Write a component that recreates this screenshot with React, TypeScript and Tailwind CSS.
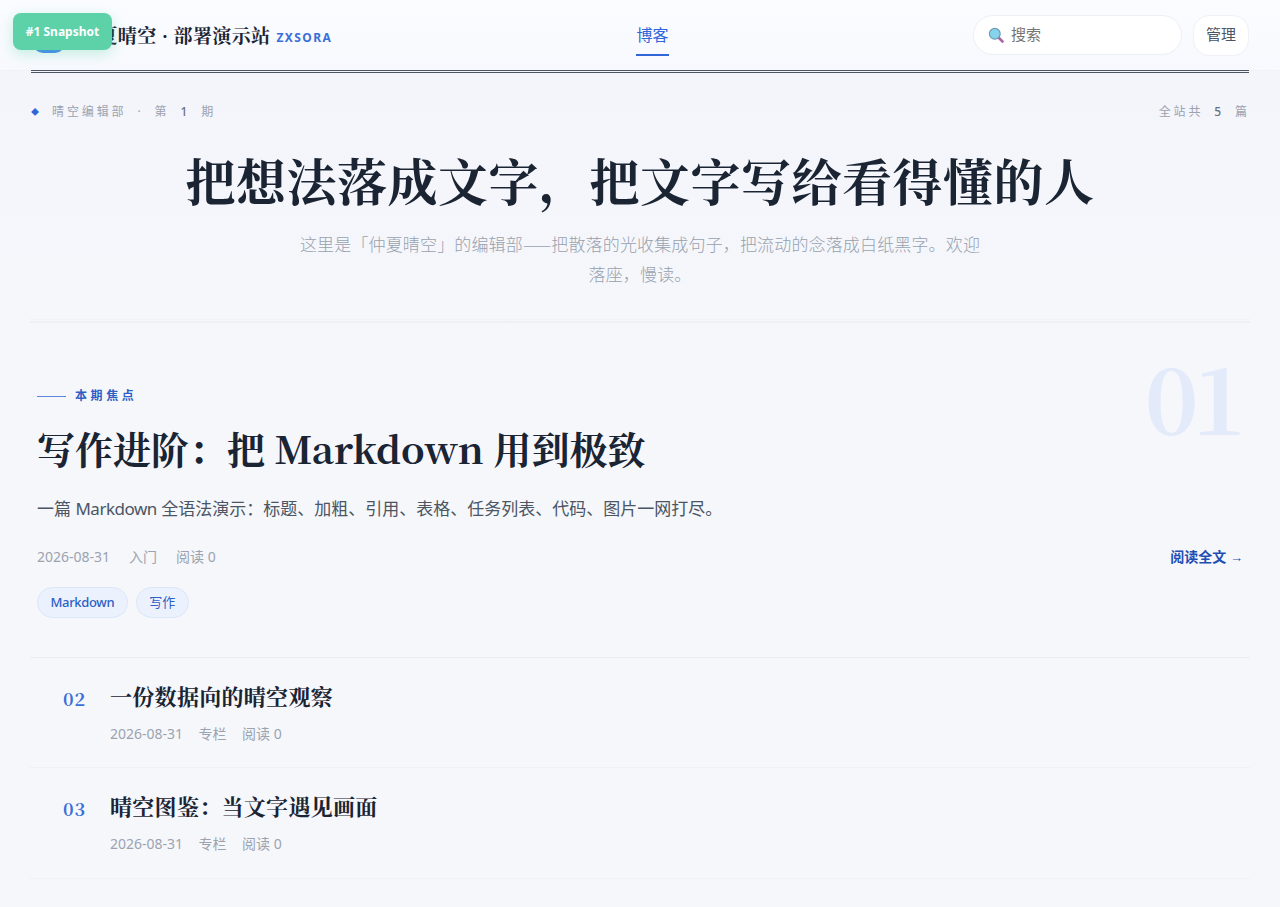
export default function App() {
  const serif = "font-['Noto_Serif_CJK_SC','Source_Han_Serif_SC','Liberation_Serif','Noto_Sans_CJK_SC',serif]";
  const sans = "font-['Noto_Sans','Noto_Sans_CJK_SC',sans-serif]";
  const Meta = ({ cat, gap }: { cat: string; gap: string }) => (
    <div className={`flex text-[14px] leading-[20px] text-[#9ca3af] ${gap}`}>
      <span>2026-08-31</span>
      <span>{cat}</span>
      <span>阅读 0</span>
    </div>
  );
  const Row = ({ n, title, h }: { n: string; title: string; h: string }) => (
    <div className={`flex border-b border-[#eef1f6] pl-[33px] pt-[21px] ${h}`}>
      <div className={`${serif} mt-[2px] w-[47px] text-[18px] leading-[34px] font-bold tracking-[0.05em] text-[#3b6fd8]`}>{n}</div>
      <div>
        <div className={`${serif} text-[22px] leading-[34px] font-bold tracking-[0.3px] text-[#1a2433]`}>{title}</div>
        <div className="mt-[11px]"><Meta cat="专栏" gap="gap-[15.5px]" /></div>
      </div>
    </div>
  );
  return (
    <div className={`${sans} relative min-h-[907px] overflow-hidden bg-[#f5f7fb]`}>
      <div className="absolute left-[13px] top-[13px] z-10 flex h-[37px] w-[99px] items-center justify-center rounded-[8px] bg-[#5dd1a8] pt-px text-[12px] font-bold text-white shadow-[0_4px_14px_rgba(92,214,171,0.35)]">#1 Snapshot</div>
      <div className="absolute left-0 top-[71px] h-[260px] w-full bg-gradient-to-b from-[#f3f5fb] to-[#f5f7fb]" />
      <div className="relative">
        <header className="flex h-[71px] items-center justify-between border-b border-[#eef1f6] bg-gradient-to-b from-[#fbfcff] to-[#f8f9fe] pl-[33px] pr-[31px]">
          <div className="flex w-[299px] items-center">
            <div className="mr-[14px] h-[34px] w-[32px] shrink-0 translate-y-[1px] rounded-[10px] bg-[#3f82ec]" />
            <span className={`${serif} whitespace-nowrap text-[19px] font-bold tracking-[0.02em] text-[#1a2433]`}>仲夏晴空 · 部署演示站</span>
            <span className="ml-[6px] translate-y-[3px] text-[12px] font-bold tracking-[0.12em] text-[#3b6fd8]">ZXSORA</span>
          </div>
          <nav className="flex h-[71px] flex-col items-center justify-center">
            <span className="relative text-[16px] leading-[28px] text-[#2f66d8]">
              博客
              <span className="absolute bottom-[-7px] left-0 h-[2px] w-full bg-[#2f66d8]" />
            </span>
          </nav>
          <div className="flex items-center gap-[11px]">
            <div className="flex h-[40px] w-[209px] items-center rounded-full border border-[#eceff5] bg-white pl-[14px]">
              <svg width="16" height="16" viewBox="0 0 16 16" className="mr-[7px]">
                <line x1="10" y1="10" x2="14.5" y2="14.5" stroke="#a9669f" strokeWidth="2.6" strokeLinecap="round" />
                <circle cx="6.8" cy="6.8" r="5.4" fill="#86d3ee" stroke="#6f9bb3" strokeWidth="1.2" />
              </svg>
              <span className="-translate-y-px text-[15px] text-[#757575]">搜索</span>
            </div>
            <div className="flex h-[41px] w-[56px] items-center justify-center rounded-[16px] border border-[#eef1f6] bg-white text-[15px] text-[#4b5563]"><span className="-translate-y-px">管理</span></div>
          </div>
        </header>
        <main className="px-[30px]">
          <div className="ml-px mr-px h-[3px] -translate-y-px border-y border-[#4b5563]" />
          <div className="mt-[29px] flex items-center justify-between text-[12px] leading-[18px] tracking-[0.24em] text-[#9ca3af] [word-spacing:5px]">
            <div className="flex items-center">
              <span className="ml-px mr-[13px] text-[8px] tracking-normal text-[#2f66d8]">◆</span>
              <span>晴空编辑部 · 第 <b className="font-medium text-[#6b7280]">1</b> 期</span>
            </div>
            <span>全站共 <b className="font-medium text-[#6b7280]">5</b> 篇</span>
          </div>
          <h1 className={`${serif} mt-[26px] text-center text-[50px] leading-[64px] font-bold tracking-[0.01em] text-[#1a2433]`}>把想法落成文字，把文字写给看得懂的人</h1>
          <p className="mx-auto mt-[19px] w-[690px] text-center text-[17px] leading-[30px] font-light tracking-[0.15px] text-[#98a1ae]">这里是「仲夏晴空」的编辑部<span className="font-['Noto_Sans_CJK_SC'] leading-none">——</span>把散落的光收集成句子，把流动的念落成白纸黑字。欢迎落座，慢读。</p>
          <div className="mt-[29px] h-[4px] border-t border-b-2 border-t-[#f0f2f6] border-b-[#edf0f5]" />
          <section className="relative h-[335px] border-b border-[#e8ecf3] px-[7px] pt-[63px]">
            <div className={`${serif} absolute right-[10px] top-[17px] text-[92px] leading-[110px] font-bold tracking-[-0.07em] text-[#e3eafa]`}>01</div>
            <div className="flex items-center text-[12px] leading-[20px] font-semibold tracking-[0.3em] text-[#2f5fc4]">
              <span className="mr-[9px] h-px w-[29px] bg-[#5b86dc]" />
              本期焦点
            </div>
            <h2 className={`${serif} mt-[14px] text-[38px] leading-[56px] font-bold text-[#1a2433]`}>写作进阶：把 Markdown 用到极致</h2>
            <p className="mt-[19px] text-[17px] leading-[28px] text-[#4b5563]">一篇 <span className="tracking-[-0.5px]">Markdown</span> 全语法演示：标题、加粗、引用、表格、任务列表、代码、图片一网打尽。</p>
            <div className="mt-[24px] flex items-center justify-between">
              <Meta cat="入门" gap="gap-[19px]" />
              <span className="text-[14px] leading-[20px] font-bold text-[#1f4fb4]">阅读全文 <span className="font-['Liberation_Sans'] text-[13px] leading-none font-normal">→</span></span>
            </div>
            <div className="mt-[20px] flex gap-[8px] text-[13px] leading-[29px] text-[#2f5fc4]">
              <span className="rounded-full border border-[#dbe6f8] bg-[#ebf2fe] px-[12.5px] font-medium tracking-[-0.35px]">Markdown</span>
              <span className="rounded-full border border-[#dbe6f8] bg-[#ebf2fe] px-[12.5px]">写作</span>
            </div>
          </section>
          <Row n="02" title="一份数据向的晴空观察" h="h-[110px]" />
          <Row n="03" title="晴空图鉴：当文字遇见画面" h="h-[111px]" />
        </main>
      </div>
    </div>
  );
}
